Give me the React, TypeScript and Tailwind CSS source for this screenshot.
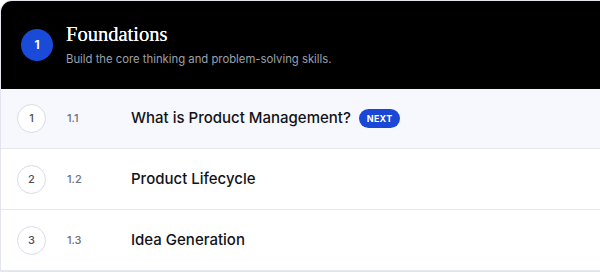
const LESSONS = [
  { n: 1, code: "1.1", title: "What is Product Management?", next: true },
  { n: 2, code: "1.2", title: "Product Lifecycle" },
  { n: 3, code: "1.3", title: "Idea Generation" },
];

export default function App() {
  return (
    <div className="w-[600px] h-[275px] bg-white overflow-hidden font-['Inter',sans-serif]">
      <div className="w-[640px] rounded-tl-xl border border-[#e3e5ee] overflow-hidden">
        <div className="h-[88px] bg-black flex items-center pl-5 gap-[13px]">
          <div className="h-8 w-8 rounded-full bg-[#1a4bd8] flex items-center justify-center text-white text-xs font-bold">
            1
          </div>
          <div className="flex flex-col -mt-[3px]">
            <h2 className="font-['Liberation_Serif',serif] text-white text-[20.5px] leading-7 font-normal [text-shadow:0_0_0.6px_white]">
              Foundations
            </h2>
            <p className="text-[#9ca0aa] text-[11.3px] mt-[3px]">Build the core thinking and problem-solving skills.</p>
          </div>
        </div>
        <ul>
          {LESSONS.map((l) => (
            <li
              key={l.n}
              className={
                "flex items-center border-b border-[#e6e8f0] " +
                (l.next ? "h-[60px] bg-[#f7f8fd]" : "h-[61px] bg-white")
              }
            >
              <div className="ml-4 h-[29px] w-[29px] rounded-full border border-[#d9dce6] bg-white flex items-center justify-center text-[11px] font-medium text-[#4b5060]">
                {l.n}
              </div>
              <span className="ml-[21px] w-[64px] text-[11px] font-medium text-[#6b7080]">{l.code}</span>
              <span className="text-[15px] font-medium text-[#111318]">{l.title}</span>
              {l.next && (
                <span className="ml-2 rounded-full bg-[#1a47d6] text-white text-[9px] font-bold tracking-wide px-2 py-[3px]">
                  NEXT
                </span>
              )}
            </li>
          ))}
        </ul>
      </div>
    </div>
  );
}
